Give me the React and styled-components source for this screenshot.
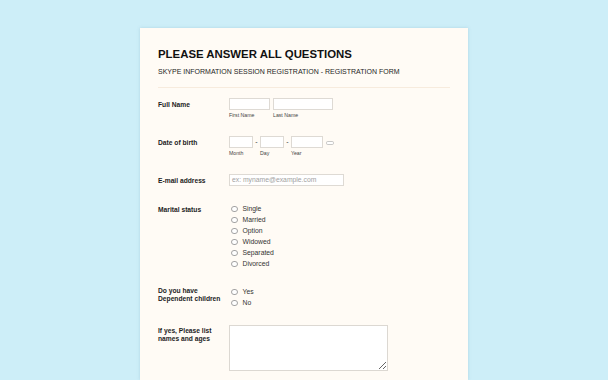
import React from 'react'
import styled, { createGlobalStyle } from 'styled-components'

const Global = createGlobalStyle`
  html, body { margin: 0; padding: 0; }
  body {
    background: #cdeef8;
    font-family: "Liberation Sans", Arial, sans-serif;
    width: 608px;
    height: 380px;
    overflow: hidden;
  }
`

const Page = styled.div`
  height: 380px;
  box-sizing: border-box;
  padding-top: 28px;
  padding-left: 140px;
  overflow: hidden;
`

const Card = styled.div`
  width: 328px;
  height: 352px;
  box-sizing: border-box;
  overflow: hidden;
  background: #fffbf5;
  box-shadow: 0 0 3px rgba(120, 170, 190, 0.35);
  padding: 20px 18px 0 18px;
`

const Header = styled.div`
  padding-bottom: 11px;
  border-bottom: 1px solid #f7ebdd;
`

const Title = styled.h1`
  margin: 0;
  font-size: 11.4px;
  line-height: 13px;
  font-weight: 700;
  color: #111;
`

const Subtitle = styled.div`
  margin-top: 6px;
  font-size: 7px;
  line-height: 9px;
  color: #1e1e1e;
`

const Form = styled.div`
  margin-top: 10px;
  display: flex;
  flex-direction: column;
  gap: 17px;
`

const Row = styled.div`
  display: grid;
  grid-template-columns: 71px 1fr;
`

const Label = styled.div`
  padding-top: ${p => p.$pt ?? 2.5}px;
  font-size: 6.7px;
  line-height: 7.7px;
  font-weight: 700;
  color: #1c1c1c;
`

const Fields = styled.div`
  display: flex;
  align-items: flex-start;
`

const Field = styled.div`
  display: flex;
  flex-direction: column;
  margin-right: ${p => p.$mr ?? 0}px;
`

const Input = styled.div`
  width: ${p => p.$w}px;
  height: 12px;
  box-sizing: border-box;
  border: 1px solid #dedad4;
  background: #fff;
  font-size: 6.8px;
  line-height: 10px;
  padding-left: 2px;
  color: #a2a2a2;
  white-space: nowrap;
  overflow: hidden;
`

const Sub = styled.div`
  margin-top: 1px;
  font-size: 5.2px;
  line-height: 8px;
  color: #444;
`

const Dash = styled.div`
  width: 7px;
  height: 12px;
  line-height: 12px;
  text-align: center;
  font-size: 7px;
  color: #333;
`

const CalIcon = styled.svg`
  margin-left: 3px;
  margin-top: 4.5px;
`

const Radios = styled.div`
  display: flex;
  flex-direction: column;
`

const RadioRow = styled.div`
  height: 11px;
  display: flex;
  align-items: center;
`

const Circle = styled.span`
  width: 6.5px;
  height: 6.5px;
  box-sizing: border-box;
  margin-left: 2px;
  border-radius: 50%;
  border: 0.7px solid #a3a3a3;
  background: #fff;
  margin-top: 1px;
`

const RadioText = styled.span`
  margin-left: 5px;
  font-size: 6.8px;
  color: #333;
`

const Area = styled.textarea`
  width: 159px;
  height: 46px;
  box-sizing: border-box;
  margin: 0;
  border: 1px solid #dcd8d2;
  background: #fff;
  resize: both;
  outline: none;
`

const Radio = ({ text }) => (
  <RadioRow>
    <Circle />
    <RadioText>{text}</RadioText>
  </RadioRow>
)

export default function App() {
  return (
    <Page>
      <Global />
      <Card>
        <Header>
          <Title>PLEASE ANSWER ALL QUESTIONS</Title>
          <Subtitle>SKYPE INFORMATION SESSION REGISTRATION - REGISTRATION FORM</Subtitle>
        </Header>
        <Form>
          <Row>
            <Label $pt={3}>Full Name</Label>
            <Fields>
              <Field $mr={3}>
                <Input $w={41} />
                <Sub>First Name</Sub>
              </Field>
              <Field>
                <Input $w={60} />
                <Sub>Last Name</Sub>
              </Field>
            </Fields>
          </Row>
          <Row>
            <Label $pt={3}>Date of birth</Label>
            <Fields>
              <Field>
                <Input $w={24} />
                <Sub>Month</Sub>
              </Field>
              <Dash>-</Dash>
              <Field>
                <Input $w={24} />
                <Sub>Day</Sub>
              </Field>
              <Dash>-</Dash>
              <Field>
                <Input $w={32} />
                <Sub>Year</Sub>
              </Field>
              <CalIcon width="8" height="4" viewBox="0 0 8 4">
                <rect x="0.5" y="0.5" width="7" height="3" rx="1.2" fill="#fff" stroke="#b0b0b0" strokeWidth="0.7" />
              </CalIcon>
            </Fields>
          </Row>
          <Row>
            <Label $pt={3}>E-mail address</Label>
            <Fields>
              <Input $w={115}>ex: myname@example.com</Input>
            </Fields>
          </Row>
          <Row>
            <Label $pt={2.5}>Marital status</Label>
            <Radios>
              {['Single', 'Married', 'Option', 'Widowed', 'Separated', 'Divorced'].map(t => (
                <Radio key={t} text={t} />
              ))}
            </Radios>
          </Row>
          <Row>
            <Label $pt={1}>Do you have<br />Dependent children</Label>
            <Radios>
              <Radio text="Yes" />
              <Radio text="No" />
            </Radios>
          </Row>
          <Row>
            <Label $pt={2}>If yes, Please list<br />names and ages</Label>
            <div>
              <Area />
            </div>
          </Row>
        </Form>
      </Card>
    </Page>
  )
}
